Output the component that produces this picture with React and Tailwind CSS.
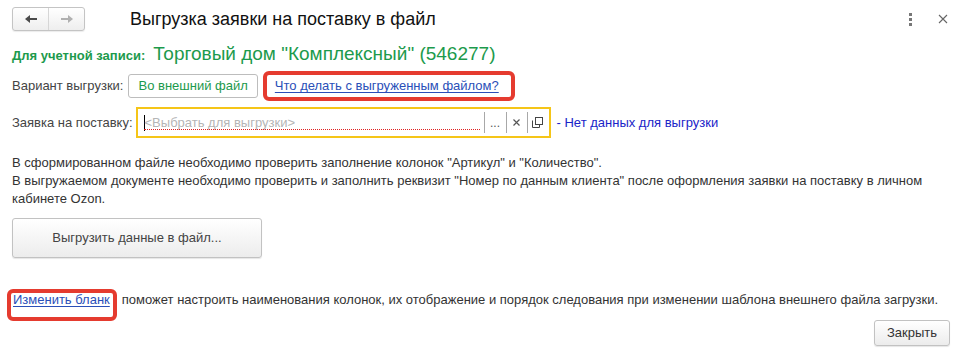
import React from "react";

function ArrowLeft({ color }) {
  return (
    <svg width="14" height="10" viewBox="0 0 14 10">
      <path d="M1 5 L6 1 L6 4 L13 4 L13 6 L6 6 L6 9 Z" fill={color} />
    </svg>
  );
}
function ArrowRight({ color }) {
  return (
    <svg width="14" height="10" viewBox="0 0 14 10">
      <path d="M13 5 L8 1 L8 4 L1 4 L1 6 L8 6 L8 9 Z" fill={color} />
    </svg>
  );
}

export default function App() {
  return (
    <div
      className="relative w-[966px] h-[360px] bg-white overflow-hidden text-[13px] text-[#333]"
      style={{ fontFamily: '"Liberation Sans", Arial, sans-serif' }}
    >
      {/* Header */}
      <div className="flex items-center h-[24px] mt-[7px] pl-[12px] pr-[16px]">
        <div className="flex h-[24px] w-[73px] rounded-[3px] border border-[#c4c4c4] bg-gradient-to-b from-white to-[#eeeeee] shadow-[0_1px_1px_rgba(0,0,0,0.08)]">
          <div className="flex flex-1 items-center justify-center border-r border-[#d6d6d6]">
            <ArrowLeft color="#4a4a4a" />
          </div>
          <div className="flex flex-1 items-center justify-center">
            <ArrowRight color="#b0b0b0" />
          </div>
        </div>
        <div className="ml-[45px] text-[18px] leading-[24px] text-[#111]">
          Выгрузка заявки на поставку в файл
        </div>
        <div className="flex-1" />
        <div className="flex flex-col gap-[2px] items-center mr-[26px]">
          <span className="block w-[3px] h-[3px] bg-[#777]" />
          <span className="block w-[3px] h-[3px] bg-[#777]" />
          <span className="block w-[3px] h-[3px] bg-[#777]" />
        </div>
        <svg width="10" height="10" viewBox="0 0 10 10" className="mr-[2px]">
          <path d="M1 1 L9 9 M9 1 L1 9" stroke="#666" strokeWidth="1.1" />
        </svg>
      </div>

      {/* Account line */}
      <div className="flex items-baseline pl-[12px] mt-[9px] h-[24px]">
        <span className="text-[13px] font-bold text-[#1c9a4c]">Для учетной записи:</span>
        <span className="ml-[8px] text-[19px] text-[#1c9a4c]">
          Торговый дом "Комплексный" (546277)
        </span>
      </div>

      {/* Variant line */}
      <div className="flex items-center pl-[12px] mt-[10px] h-[24px]">
        <span className="text-[#444]">Вариант выгрузки:</span>
        <div className="ml-[5px] flex items-center h-[24px] px-[9px] rounded-[3px] border border-[#bdbdbd] bg-white text-[#1c9a4c]">
          Во внешний файл
        </div>
        <a className="ml-[17px] text-[#2a4fb8] underline underline-offset-[2px]">
          Что делать с выгруженным файлом?
        </a>
      </div>

      {/* Request line */}
      <div className="flex items-center pl-[12px] mt-[9px] h-[31px]">
        <span className="text-[#444]">Заявка на поставку:</span>
        <div className="ml-[3px] flex items-center h-[31px] w-[415px] border-2 border-[#f5c518] bg-white">
          <div className="relative flex items-center flex-1 h-full pl-[6px] pr-[4px]">
            <span className="block w-px h-[16px] bg-black" />
            <span className="text-[#b5b5b5]">&lt;Выбрать для выгрузки&gt;</span>
            <span className="absolute left-[6px] right-[4px] bottom-[6px] border-b border-dotted border-[#e02020]" />
          </div>
          <div className="flex items-center justify-center w-[22px] h-[21px] border-l border-[#a8a8a8] text-[#555] text-[12px]">
            ...
          </div>
          <div className="flex items-center justify-center w-[21px] h-[21px] border-l border-[#a8a8a8]">
            <svg width="7" height="7" viewBox="0 0 7 7">
              <path d="M0.5 0.5 L6.5 6.5 M6.5 0.5 L0.5 6.5" stroke="#555" strokeWidth="1.2" />
            </svg>
          </div>
          <div className="flex items-center justify-center w-[21px] h-[21px] border-l border-[#a8a8a8] mr-[1px]">
            <svg width="11" height="11" viewBox="0 0 11 11">
              <rect x="3.5" y="0.5" width="7" height="7" fill="white" stroke="#444" />
              <path d="M0.5 3.5 L0.5 10.5 L7.5 10.5 L7.5 7.5" fill="none" stroke="#444" />
            </svg>
          </div>
        </div>
        <span className="ml-[6px] text-[#1a24c8]">- Нет данных для выгрузки</span>
      </div>

      {/* Paragraph */}
      <div className="pl-[12px] pr-[20px] mt-[16px] leading-[18px] text-[#333]">
        <div>В сформированном файле необходимо проверить заполнение колонок "Артикул" и "Количество".</div>
        <div>
          В выгружаемом документе необходимо проверить и заполнить реквизит "Номер по данным клиента" после оформления заявки на поставку в личном кабинете Ozon.
        </div>
      </div>

      {/* Export button */}
      <div className="pl-[12px] mt-[10px]">
        <div className="flex items-center justify-center w-[250px] h-[40px] rounded-[3px] border border-[#c2c2c2] bg-gradient-to-b from-white to-[#ececec] shadow-[0_1px_1px_rgba(0,0,0,0.1)] text-[#444]">
          Выгрузить данные в файл...
        </div>
      </div>

      {/* Change form line */}
      <div className="flex items-center pl-[13px] mt-[33px] h-[18px]">
        <a className="text-[#2a4fb8] underline underline-offset-[2px]">Изменить бланк</a>
        <span className="ml-[12px] text-[#333]">
          поможет настроить наименования колонок, их отображение и порядок следования при изменении шаблона внешнего файла загрузки.
        </span>
      </div>

      {/* Close */}
      <div className="flex justify-end pr-[16px] mt-[11px]">
        <div className="flex items-center justify-center w-[76px] h-[26px] rounded-[3px] border border-[#c2c2c2] bg-gradient-to-b from-white to-[#ececec] shadow-[0_1px_1px_rgba(0,0,0,0.1)] text-[#333]">
          Закрыть
        </div>
      </div>

      {/* Annotation highlights */}
      <div className="absolute left-[263px] top-[71px] w-[252px] h-[30px] rounded-[6px] border-[4px] border-[#e53b2f]" />
      <div className="absolute left-[7px] top-[289px] w-[110px] h-[32px] rounded-[6px] border-[4px] border-[#e53b2f]" />
    </div>
  );
}
